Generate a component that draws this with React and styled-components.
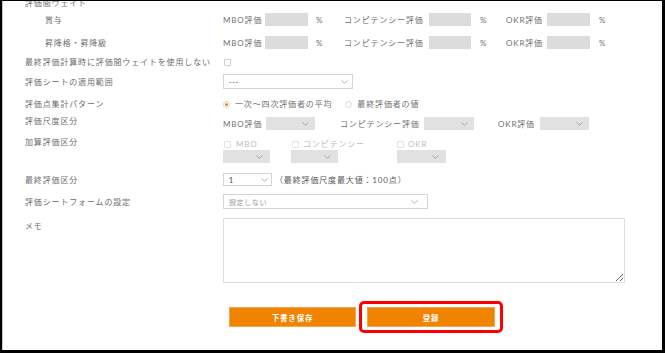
import React from 'react';
import styled, { createGlobalStyle } from 'styled-components';

const Global = createGlobalStyle`
  html, body { margin: 0; padding: 0; background: #fff; }
  body {
    width: 665px; height: 353px; overflow: hidden;
    font-family: "Lato", "Noto Sans CJK JP", sans-serif;
  }
  * { box-sizing: border-box; }
`;

const Frame = styled.div`
  width: 665px;
  height: 353px;
  border-style: solid;
  border-color: #000;
  border-width: 1px 3px 3px 2px;
  box-shadow: inset 1px 0 0 #c8c8c8;
  overflow: hidden;
  background: #fff;
  padding-left: 23px;
`;

const Form = styled.div`
  display: flex;
  flex-direction: column;
  margin-top: -4px;
`;

const Row = styled.div`
  display: grid;
  grid-template-columns: 198px 1fr;
  align-items: ${p => p.$align || 'center'};
  margin-top: ${p => p.$mt || 0}px;
  min-height: ${p => p.$h || 12}px;
`;

const Label = styled.div`
  font-size: 8px;
  line-height: 12px;
  letter-spacing: 0.85px;
  color: #6e6e6e;
  white-space: nowrap;
  padding-left: ${p => p.$indent || 0}px;
  padding-top: ${p => p.$pt || 0}px;
`;

const Controls = styled.div`
  display: flex;
  align-items: center;
  padding-top: ${p => p.$pt || 0}px;
`;

const Group = styled.div`
  display: flex;
  align-items: center;
  flex: none;
  width: ${p => p.$w ? `${p.$w}px` : 'auto'};
`;

const Text = styled.span`
  font-size: 8px;
  line-height: 12px;
  letter-spacing: 0.85px;
  color: ${p => p.$muted ? '#bdbdbd' : p.$dark ? '#555' : '#707070'};
  white-space: nowrap;
  flex: none;
  width: ${p => p.$w ? `${p.$w}px` : 'auto'};
  margin-left: ${p => p.$ml || 0}px;
`;

const GrayBox = styled.div`
  flex: none;
  width: ${p => p.$w}px;
  height: 13px;
  background: #dcdcdc;
`;

const SelectBox = styled.div`
  flex: none;
  display: flex;
  align-items: center;
  justify-content: space-between;
  width: ${p => p.$w}px;
  height: ${p => p.$h || 13}px;
  padding: 0 ${p => p.$pr || 6}px 0 5px;
  background: ${p => p.$gray ? '#e1e1e1' : '#fff'};
  border: 1px solid ${p => p.$gray ? '#e1e1e1' : '#d4d4d4'};
`;

const SelectText = styled.span`
  font-size: 7px;
  letter-spacing: 0.6px;
  color: ${p => p.$light ? '#9a9a9a' : '#444'};
  white-space: nowrap;
`;

const Check = styled.span`
  flex: none;
  display: inline-block;
  width: 7px;
  height: 7px;
  border: 1px solid ${p => p.$muted ? '#e2e2e2' : '#cfcfcf'};
  border-radius: 1px;
  background: #fff;
  margin-left: ${p => p.$ml || 0}px;
  margin-right: ${p => p.$mr || 0}px;
`;

const Radio = styled.span`
  flex: none;
  display: inline-flex;
  align-items: center;
  justify-content: center;
  width: 7px;
  height: 7px;
  border-radius: 50%;
  border: 1px solid #d6d6d6;
  background: #fff;
  margin-left: ${p => p.$ml || 0}px;
  margin-right: 5px;
  &::after {
    content: '';
    display: ${p => p.$on ? 'block' : 'none'};
    width: 3px;
    height: 3px;
    border-radius: 50%;
    background: #f08300;
  }
`;

const AddGrid = styled.div`
  display: grid;
  grid-template-columns: 68px 106px 60px;
  grid-template-rows: 12px 13px;
  padding-top: 2px;
`;

const Cell = styled.div`
  display: flex;
  align-items: center;
`;

const Memo = styled.textarea`
  width: 402px;
  height: 65px;
  border: 1px solid #dedede;
  resize: both;
  margin: 0;
  padding: 2px;
  font-family: inherit;
  outline: none;
`;

const Buttons = styled.div`
  display: flex;
  align-items: center;
  margin-top: 18px;
  margin-left: 204px;
`;

const Btn = styled.button`
  width: ${p => p.$w}px;
  height: 20px;
  border: 1px solid #f5a54a;
  background: #f08300;
  color: #fff;
  font-family: "Lato", "Noto Sans CJK JP", sans-serif;
  font-size: 7.5px;
  font-weight: bold;
  letter-spacing: 0.8px;
  padding: 0;
`;

const Highlight = styled.div`
  margin-left: 3px;
  padding: 3px 5px;
  border: 3px solid #ff0000;
  border-radius: 5px;
  display: flex;
`;

const Chevron = () => (
  <svg width="7" height="4" viewBox="0 0 7 4">
    <path d="M0.5 0.5 L3.5 3.3 L6.5 0.5" stroke="#9a9a9a" strokeWidth="0.8" fill="none" />
  </svg>
);

const WeightRow = ({ label, mt }) => (
  <Row $mt={mt} $h={13}>
    <Label $indent={20}>{label}</Label>
    <Controls>
      <Group $w={121}>
        <Text $w={42}>MBO評価</Text>
        <GrayBox $w={43} />
        <Text $ml={8}>%</Text>
      </Group>
      <Group $w={162}>
        <Text $w={85}>コンピテンシー評価</Text>
        <GrayBox $w={42} />
        <Text $ml={9}>%</Text>
      </Group>
      <Group>
        <Text $w={41}>OKR評価</Text>
        <GrayBox $w={43} />
        <Text $ml={9}>%</Text>
      </Group>
    </Controls>
  </Row>
);

export default function App() {
  return (
    <>
      <Global />
      <Frame>
        <Form>
          <Row>
            <Label>評価間ウェイト</Label>
          </Row>
          <WeightRow label="賞与" mt={4} />
          <WeightRow label="昇降格・昇降級" mt={10} />
          <Row $mt={7}>
            <Label>最終評価計算時に評価間ウェイトを使用しない</Label>
            <Controls>
              <Check $ml={1} />
            </Controls>
          </Row>
          <Row $mt={6} $h={15}>
            <Label>評価シートの適用範囲</Label>
            <Controls>
              <SelectBox $w={130} $h={15} $pr={4}>
                <SelectText>---</SelectText>
                <Chevron />
              </SelectBox>
            </Controls>
          </Row>
          <Row $mt={9}>
            <Label>評価点集計パターン</Label>
            <Controls>
              <Radio $on />
              <Text>一次～四次評価者の平均</Text>
              <Radio $ml={13} />
              <Text>最終評価者の値</Text>
            </Controls>
          </Row>
          <Row $mt={5} $align="start" $h={15}>
            <Label>評価尺度区分</Label>
            <Controls $pt={2}>
              <Group $w={117}>
                <Text $w={43}>MBO評価</Text>
                <SelectBox $gray $w={49} $pr={5}><span /><Chevron /></SelectBox>
              </Group>
              <Group $w={158}>
                <Text $w={84}>コンピテンシー評価</Text>
                <SelectBox $gray $w={50} $pr={5}><span /><Chevron /></SelectBox>
              </Group>
              <Group>
                <Text $w={42}>OKR評価</Text>
                <SelectBox $gray $w={49} $pr={5}><span /><Chevron /></SelectBox>
              </Group>
            </Controls>
          </Row>
          <Row $mt={6} $align="start" $h={27}>
            <Label>加算評価区分</Label>
            <AddGrid>
              <Cell><Check $muted $ml={1} $mr={5} /><Text $muted>MBO</Text></Cell>
              <Cell><Check $muted $ml={1} $mr={4} /><Text $muted>コンピテンシー</Text></Cell>
              <Cell><Check $muted $mr={4} /><Text $muted>OKR</Text></Cell>
              <Cell><SelectBox $gray $w={47} $pr={6}><span /><Chevron /></SelectBox></Cell>
              <Cell><SelectBox $gray $w={47} $pr={6}><span /><Chevron /></SelectBox></Cell>
              <Cell><SelectBox $gray $w={49} $pr={6}><span /><Chevron /></SelectBox></Cell>
            </AddGrid>
          </Row>
          <Row $mt={10} $h={13}>
            <Label>最終評価区分</Label>
            <Controls>
              <SelectBox $w={49} $pr={3}>
                <SelectText>1</SelectText>
                <Chevron />
              </SelectBox>
              <Text $dark $ml={3}>（最終評価尺度最大値：100点）</Text>
            </Controls>
          </Row>
          <Row $mt={8} $h={15}>
            <Label>評価シートフォームの設定</Label>
            <Controls>
              <SelectBox $w={205} $h={15} $pr={9}>
                <SelectText $light>設定しない</SelectText>
                <Chevron />
              </SelectBox>
            </Controls>
          </Row>
          <Row $mt={9} $align="start" $h={65}>
            <Label $pt={2}>メモ</Label>
            <Controls>
              <Memo />
            </Controls>
          </Row>
          <Buttons>
            <Btn $w={127}>下書き保存</Btn>
            <Highlight>
              <Btn $w={128}>登録</Btn>
            </Highlight>
          </Buttons>
        </Form>
      </Frame>
    </>
  );
}
